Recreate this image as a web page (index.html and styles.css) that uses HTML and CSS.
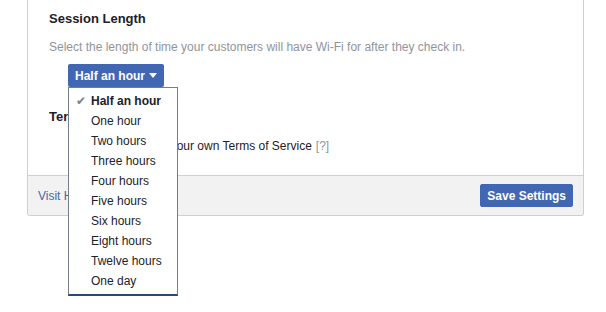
FILE: index.html
```html
<!DOCTYPE html>
<html lang="en">
<head>
  <meta charset="UTF-8">
  <title>Wi-Fi Settings</title>
  <link rel="stylesheet" href="styles.css">
</head>
<body>
  <div class="panel">
    <div class="panel-body">
      <h3>Session Length</h3>
      <p class="hint">Select the length of time your customers will have Wi-Fi for after they check in.</p>

      <div class="select">
        <button class="select-btn">Half an hour <span class="caret"></span></button>
        <ul class="menu">
          <li class="checked">Half an hour</li>
          <li>One hour</li>
          <li>Two hours</li>
          <li>Three hours</li>
          <li>Four hours</li>
          <li>Five hours</li>
          <li>Six hours</li>
          <li>Eight hours</li>
          <li>Twelve hours</li>
          <li>One day</li>
        </ul>
      </div>

      <h3 class="terms-title">Terms of Service</h3>
      <label class="option">
        <input type="checkbox">
        <span>Use your own Terms of Service</span>
        <span class="help">[?]</span>
      </label>
    </div>

    <div class="panel-footer">
      <a href="#">Visit Help Center</a>
      <button class="save-btn">Save Settings</button>
    </div>
  </div>
</body>
</html>
```

FILE: styles.css
```css
html {
  height: 100%;
}

body {
  margin: 0;
  min-height: 100%;
  font-family: "Liberation Sans", Arial, sans-serif;
  font-size: 12px;
  color: #1d2129;
  background: #fff;
}

.panel {
  width: 555px;
  margin-left: 27px;
  border: 1px solid #ccd0d5;
  border-top: none;
  border-radius: 0 0 3px 3px;
}

.panel-body {
  padding: 10px 21px 21px;
}

.panel-body h3 {
  margin: 0;
  font-size: 13px;
  line-height: 18px;
}

.hint {
  margin: 11px 0 9px;
  line-height: 16px;
  color: #90949c;
}

.select {
  position: relative;
  margin-left: 19px;
}

.select-btn {
  height: 23px;
  padding: 0 7px;
  border: none;
  border-radius: 2px;
  background: #4267b2;
  color: #fff;
  font-family: inherit;
  font-size: 12px;
  font-weight: bold;
}

.caret {
  display: inline-block;
  margin-left: 1px;
  vertical-align: 2px;
  border-left: 4px solid transparent;
  border-right: 4px solid transparent;
  border-top: 5px solid #fff;
}

.menu {
  position: absolute;
  top: 23px;
  left: 0;
  width: 108px;
  margin: 0;
  padding: 3px 0 3px;
  list-style: none;
  background: #fff;
  border: 1px solid #777d88;
  border-bottom: 2px solid #29487d;
  z-index: 2;
}

.menu li {
  position: relative;
  height: 20px;
  line-height: 20px;
  padding-left: 22px;
}

.menu li.checked {
  font-weight: bold;
}

.menu li.checked::before {
  content: "\2714";
  position: absolute;
  left: 7px;
  font-size: 12px;
  color: #7f7f7f;
  font-family: "DejaVu Sans", sans-serif;
}

.terms-title {
  margin-top: 21px !important;
}

.option {
  display: flex;
  align-items: center;
  gap: 6px;
  margin: 12px 0 0 78px;
  line-height: 16px;
}

.option input {
  margin: 0;
}

.help {
  color: #90949c;
  margin-left: -2px;
}

.panel-footer {
  display: flex;
  align-items: center;
  justify-content: space-between;
  padding: 8px 10px;
  background: #f2f2f2;
  border-top: 1px solid #ccd0d5;
  border-radius: 0 0 3px 3px;
}

.panel-footer a {
  color: #4b67a1;
  text-decoration: none;
}

.save-btn {
  height: 23px;
  padding: 0 6px;
  border: 1px solid #4267b2;
  border-radius: 2px;
  background: #4267b2;
  color: #fff;
  font-family: inherit;
  font-size: 12px;
  font-weight: bold;
}
```
